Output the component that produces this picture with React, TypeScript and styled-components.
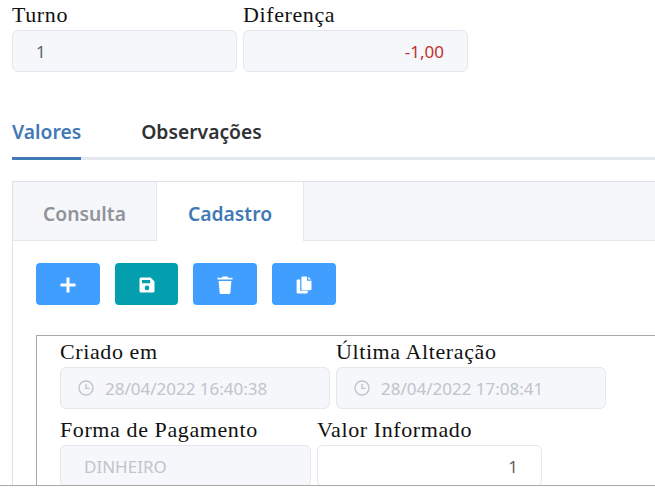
import React from "react";
import styled, { createGlobalStyle } from "styled-components";

const Global = createGlobalStyle`
  html, body { margin: 0; padding: 0; background: #fff; overflow: hidden; }
  * { box-sizing: border-box; }
`;

const Page = styled.div`
  width: 655px;
  height: 486px;
  overflow: hidden;
  border-bottom: 1px solid #a9a9a9;
  padding: 0 0 0 12px;
`;

const Row = styled.div<{ $top?: number }>`
  display: flex;
  gap: 6px;
  margin-top: ${(p) => p.$top ?? 0}px;
`;

const Field = styled.div<{ $w: number }>`
  width: ${(p) => p.$w}px;
  flex: none;
`;

const Label = styled.div`
  font-family: "Liberation Serif", Georgia, serif;
  font-size: 22px;
  letter-spacing: 0.6px;
  line-height: 25px;
  height: 30px;
  padding-top: 2px;
  color: #111;
  white-space: nowrap;
`;

const Input = styled.div<{ $align?: string; $plain?: boolean; $pad?: number }>`
  height: 42px;
  display: flex;
  align-items: center;
  justify-content: ${(p) => (p.$align === "right" ? "flex-end" : "flex-start")};
  gap: 11px;
  padding: 0 ${(p) => p.$pad ?? 23}px;
  border: 1px solid #e4e7ed;
  border-radius: 6px;
  background: ${(p) => (p.$plain ? "#fff" : "#f5f7fa")};
  font-family: "Noto Sans", "Open Sans", sans-serif;
  font-size: 17px;
  white-space: nowrap;
`;

const Value = styled.span<{ $color: string }>`
  color: ${(p) => p.$color};
`;

const Tabs = styled.div`
  margin-top: 41px;
  display: flex;
  gap: 60px;
  height: 47px;
  border-bottom: 3px solid #e4e7ed;
`;

const Tab = styled.div<{ $active?: boolean }>`
  height: 47px;
  line-height: 37px;
  font-family: "Noto Sans", "Open Sans", sans-serif;
  font-weight: 600;
  font-size: 19.3px;
  color: ${(p) => (p.$active ? "#4179b6" : "#303133")};
  border-bottom: ${(p) => (p.$active ? "3px solid #4179b6" : "none")};
`;

const Panel = styled.div`
  margin-top: 21px;
  width: 660px;
  height: 320px;
  border: 1px solid #dcdfe6;
  border-bottom: none;
`;

const PanelHeader = styled.div`
  display: flex;
  height: 59px;
  background: #f5f7fa;
  border-bottom: 1px solid #e4e7ed;
`;

const PanelTab = styled.div<{ $active?: boolean; $w: number }>`
  width: ${(p) => p.$w}px;
  height: ${(p) => (p.$active ? 59 : 58)}px;
  text-align: center;
  line-height: 64px;
  font-family: "Noto Sans", "Open Sans", sans-serif;
  font-weight: 600;
  font-size: 19.3px;
  color: ${(p) => (p.$active ? "#4179b6" : "#909399")};
  background: ${(p) => (p.$active ? "#fff" : "transparent")};
  border-right: 1px solid #e4e7ed;
`;

const PanelBody = styled.div`
  padding: 22px 0 0 23px;
`;

const Toolbar = styled.div`
  display: flex;
  gap: 15px;
`;

const ToolButton = styled.div<{ $teal?: boolean; $w?: number }>`
  width: ${(p) => p.$w ?? 64}px;
  height: 42px;
  padding-top: 1px;
  border-radius: 4px;
  background: ${(p) => (p.$teal ? "#039faf" : "#409eff")};
  display: flex;
  align-items: center;
  justify-content: center;
`;

const Fieldset = styled.div`
  margin-top: 30px;
  width: 640px;
  height: 170px;
  border: 1px solid #a9a9a9;
  border-right: none;
  border-bottom: none;
  padding: 1px 0 0 23px;
`;

const Clock = () => (
  <svg width="16" height="16" viewBox="0 0 16 16" fill="none" stroke="#c0c4cc" strokeWidth="1.4">
    <circle cx="8" cy="8" r="7" />
    <path d="M8 4v4.4h3.6" />
  </svg>
);

const Plus = () => (
  <svg width="16" height="16" viewBox="0 0 16 16" fill="none" stroke="#fff" strokeWidth="3">
    <path d="M8 .5v15M.5 8h15" />
  </svg>
);

const Save = () => (
  <svg width="16" height="16" viewBox="0 0 16 16">
    <path
      fill="#fff"
      fillRule="evenodd"
      d="M2 0.5h9.5L15.5 4.5V14a1.5 1.5 0 0 1-1.5 1.5H2A1.5 1.5 0 0 1 .5 14V2A1.5 1.5 0 0 1 2 .5ZM3 3v3.2h8.2V3ZM8 8.6a2.3 2.3 0 1 0 0 4.6 2.3 2.3 0 0 0 0-4.6Z"
    />
  </svg>
);

const Trash = () => (
  <svg width="16" height="18" viewBox="0 0 16 18">
    <path fill="#fff" d="M5.5 .5h5l.6 1.3H15.5V3.6H.5V1.8h4.4ZM1.6 5h12.8l-1 11.4A1.6 1.6 0 0 1 11.8 18H4.2a1.6 1.6 0 0 1-1.6-1.6Z" />
  </svg>
);

const Copy = () => (
  <svg width="16" height="18" viewBox="0 0 16 18">
    <path fill="#fff" d="M6.6 .5H11v4.2h4.5V13a1.2 1.2 0 0 1-1.2 1.2H6.6A1.2 1.2 0 0 1 5.4 13V1.7A1.2 1.2 0 0 1 6.6 .5ZM12.2 .8l3 2.8h-3ZM1.8 3.6h2.4v11.2h7.6v1.4a1.2 1.2 0 0 1-1.2 1.2H1.8A1.2 1.2 0 0 1 .6 16.2V4.8a1.2 1.2 0 0 1 1.2-1.2Z" />
  </svg>
);

export default function App() {
  return (
    <Page>
      <Global />
      <Row>
        <Field $w={225}>
          <Label>Turno</Label>
          <Input>
            <Value $color="#606266">1</Value>
          </Input>
        </Field>
        <Field $w={225}>
          <Label>Diferença</Label>
          <Input $align="right">
            <Value $color="#c0302e">-1,00</Value>
          </Input>
        </Field>
      </Row>
      <Tabs>
        <Tab $active>Valores</Tab>
        <Tab>Observações</Tab>
      </Tabs>
      <Panel>
        <PanelHeader>
          <PanelTab $w={144}>Consulta</PanelTab>
          <PanelTab $active $w={147}>Cadastro</PanelTab>
        </PanelHeader>
        <PanelBody>
          <Toolbar>
            <ToolButton><Plus /></ToolButton>
            <ToolButton $teal $w={63}><Save /></ToolButton>
            <ToolButton><Trash /></ToolButton>
            <ToolButton><Copy /></ToolButton>
          </Toolbar>
          <Fieldset>
            <Row>
              <Field $w={270}>
                <Label>Criado em</Label>
                <Input $pad={17}>
                  <Clock />
                  <Value $color="#c0c4cc">28/04/2022 16:40:38</Value>
                </Input>
              </Field>
              <Field $w={270}>
                <Label>Última Alteração</Label>
                <Input $pad={17}>
                  <Clock />
                  <Value $color="#c0c4cc">28/04/2022 17:08:41</Value>
                </Input>
              </Field>
            </Row>
            <Row $top={6}>
              <Field $w={251}>
                <Label>Forma de Pagamento</Label>
                <Input>
                  <Value $color="#c0c4cc">DINHEIRO</Value>
                </Input>
              </Field>
              <Field $w={225}>
                <Label>Valor Informado</Label>
                <Input $plain $align="right">
                  <Value $color="#606266">1</Value>
                </Input>
              </Field>
            </Row>
          </Fieldset>
        </PanelBody>
      </Panel>
    </Page>
  );
}
